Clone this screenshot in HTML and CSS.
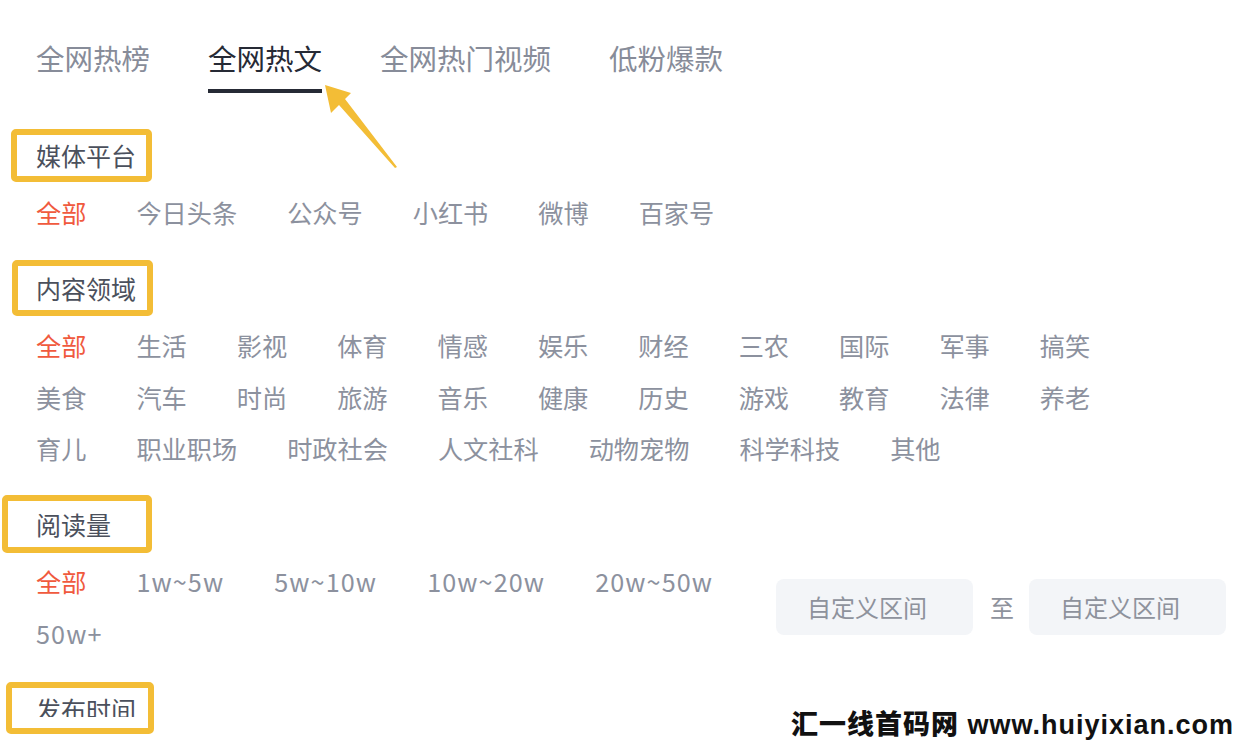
FILE: index.html
```html
<!DOCTYPE html>
<html>
<head>
    <meta charset="utf-8">
    <title>全网热文</title>
    <link rel="stylesheet" href="styles.css">
</head>
<body>
    <div class="page">
        <!-- Top tabs -->
        <nav class="tabs">
            <a class="tab">全网热榜</a>
            <a class="tab active">全网热文</a>
            <a class="tab">全网热门视频</a>
            <a class="tab">低粉爆款</a>
        </nav>

        <!-- Pointer arrow to the active tab -->
        <svg class="pointer" width="90" height="95" viewBox="0 0 90 95">
            <polygon points="5,5 31,13 25,19 77,87 75,88 19,25 11,33" fill="#f3bd36"/>
        </svg>

        <section class="filter">
            <div class="filter-title">
                <span>媒体平台</span>
                <i class="mark mark-1"></i>
            </div>
            <ul class="options">
                <li class="selected">全部</li>
                <li>今日头条</li>
                <li>公众号</li>
                <li>小红书</li>
                <li>微博</li>
                <li>百家号</li>
            </ul>
        </section>

        <section class="filter">
            <div class="filter-title">
                <span>内容领域</span>
                <i class="mark mark-2"></i>
            </div>
            <ul class="options">
                <li class="selected">全部</li>
                <li>生活</li>
                <li>影视</li>
                <li>体育</li>
                <li>情感</li>
                <li>娱乐</li>
                <li>财经</li>
                <li>三农</li>
                <li>国际</li>
                <li>军事</li>
                <li>搞笑</li>
                <li>美食</li>
                <li>汽车</li>
                <li>时尚</li>
                <li>旅游</li>
                <li>音乐</li>
                <li>健康</li>
                <li>历史</li>
                <li>游戏</li>
                <li>教育</li>
                <li>法律</li>
                <li>养老</li>
                <li>育儿</li>
                <li>职业职场</li>
                <li>时政社会</li>
                <li>人文社科</li>
                <li>动物宠物</li>
                <li>科学科技</li>
                <li>其他</li>
            </ul>
        </section>

        <section class="filter">
            <div class="filter-title">
                <span>阅读量</span>
                <i class="mark mark-3"></i>
            </div>
            <div class="filter-row">
                <ul class="options narrow">
                    <li class="selected">全部</li>
                    <li class="num">1w~5w</li>
                    <li class="num">5w~10w</li>
                    <li class="num">10w~20w</li>
                    <li class="num">20w~50w</li>
                    <li class="num">50w+</li>
                </ul>
                <div class="range">
                    <input type="text" placeholder="自定义区间">
                    <span class="range-sep">至</span>
                    <input type="text" placeholder="自定义区间">
                </div>
            </div>
        </section>

        <section class="filter">
            <div class="filter-title cut">
                <span>发布时间</span>
                <i class="mark mark-4"></i>
            </div>
        </section>

        <div class="watermark">汇一线首码网 www.huiyixian.com</div>
    </div>
</body>
</html>
```

FILE: styles.css
```css
body {
    margin: 0;
    background-color: #ffffff;
    font-family: "Noto Sans CJK SC", "Noto Sans", sans-serif;
    overflow: hidden;
}

.page {
    position: relative;
    height: 743px;
    padding: 0 14px 0 36px;
    box-sizing: border-box;
}

/* Tabs */
.tabs {
    display: flex;
    gap: 58px;
    padding-top: 38px;
}

.tab {
    font-size: 28.5px;
    line-height: 40px;
    color: #878c99;
    padding-bottom: 11px;
    border-bottom: 4px solid transparent;
}

.tab.active {
    color: #262a35;
    border-bottom-color: #262a35;
}

.pointer {
    position: absolute;
    left: 320px;
    top: 80px;
}

/* Filter sections */
.filter {
    margin-top: 40px;
}

.tabs + .pointer + .filter {
    margin-top: 44px;
}

.filter-title {
    position: relative;
    width: fit-content;
    font-size: 25px;
    line-height: 36px;
    color: #4b505c;
    margin-bottom: 21px;
}

.filter-title.cut span {
    display: block;
    height: 26px;
    overflow: hidden;
}

/* highlight box round a title */
.mark {
    position: absolute;
    left: -25px;
    width: 141px;
    border: 6px solid #f3bd36;
    border-radius: 5px;
    box-sizing: border-box;
}

.mark-1 { top: -8px; bottom: -9px; }
.mark-2 { top: -10px; bottom: -10px; left: -24px; }
.mark-3 { top: -11px; bottom: -11px; left: -34px; width: 150px; }
.mark-4 { top: -9px; bottom: -17px; left: -30px; width: 148px; }

.options {
    list-style: none;
    margin: 0;
    padding: 0;
    display: flex;
    flex-wrap: wrap;
    row-gap: 15.5px;
}

.options li {
    font-size: 25.2px;
    line-height: 36px;
    color: #8c919e;
    margin-right: 50px;
    white-space: nowrap;
}

.options li.num {
    letter-spacing: 1.1px;
}

.options li.selected {
    color: #f05a3e;
}

.filter-row {
    display: flex;
    align-items: center;
}

.options.narrow {
    flex: none;
    width: 740px;
}

.range {
    display: flex;
    align-items: center;
}

.range input {
    width: 197px;
    height: 56px;
    border: none;
    border-radius: 8px;
    background-color: #f3f5f8;
    padding: 0 0 0 31px;
    box-sizing: border-box;
    font-family: inherit;
    font-size: 24px;
    color: #8e929c;
    outline: none;
}

.range input::placeholder {
    color: #8e929c;
}

.range-sep {
    font-size: 24px;
    color: #8e929c;
    margin: 0 15px 0 17px;
}

.watermark {
    position: absolute;
    right: 4px;
    bottom: 4px;
    font-family: "Liberation Sans", "Noto Sans CJK SC", sans-serif;
    font-weight: 900;
    font-size: 27px;
    line-height: 28px;
    letter-spacing: 1px;
    color: #111111;
}
```
